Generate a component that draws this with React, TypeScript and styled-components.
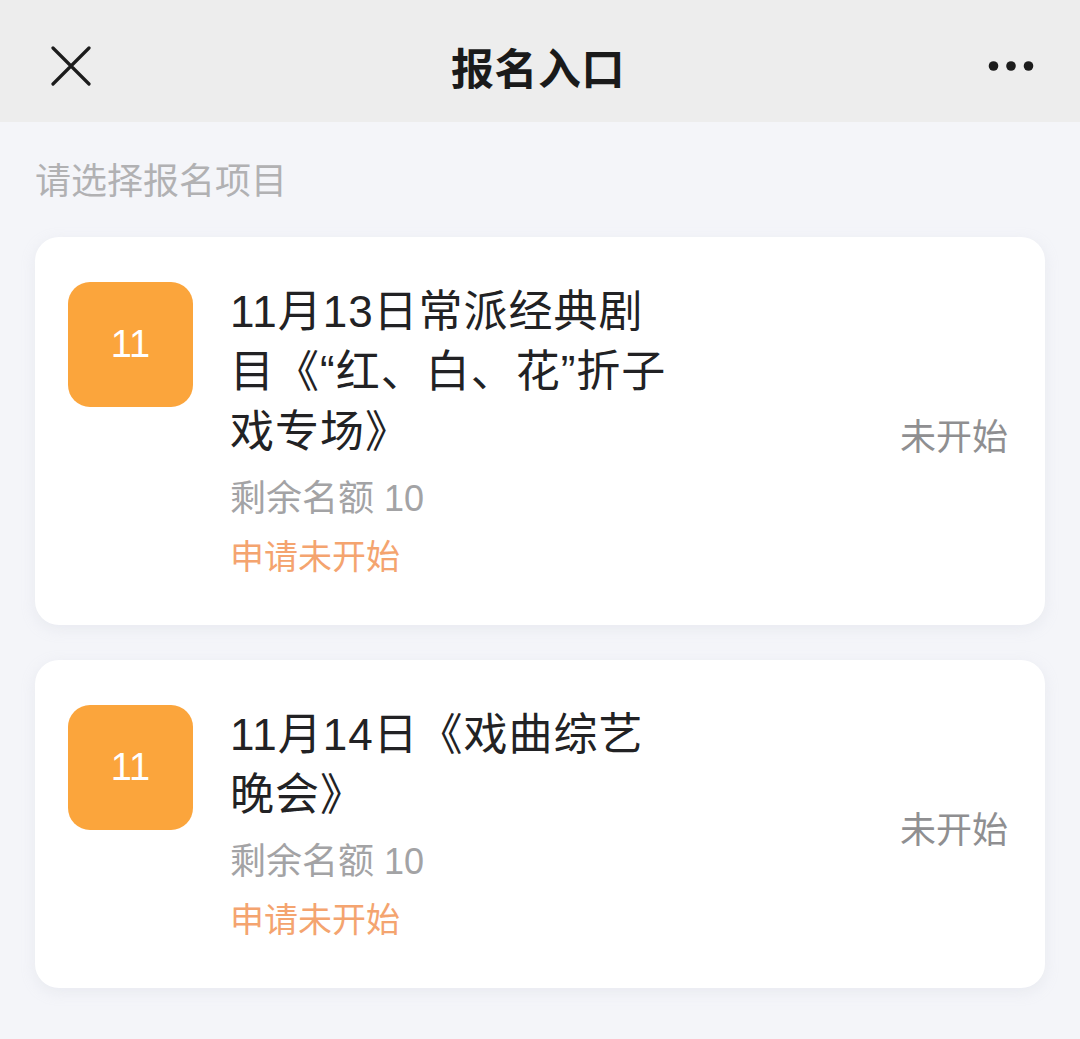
import React from "react";
import styled, { createGlobalStyle } from "styled-components";

interface Project {
  id: number;
  day: string;
  title: string;
  quota: number;
  applyText: string;
  status: string;
}

const projects: Project[] = [
  {
    id: 1,
    day: "11",
    title: "11月13日常派经典剧目《“红、白、花”折子戏专场》",
    quota: 10,
    applyText: "申请未开始",
    status: "未开始",
  },
  {
    id: 2,
    day: "11",
    title: "11月14日《戏曲综艺晚会》",
    quota: 10,
    applyText: "申请未开始",
    status: "未开始",
  },
];

const GlobalStyle = createGlobalStyle`
  html, body {
    margin: 0;
    padding: 0;
    background: #f4f5f9;
  }
  body {
    font-family: "Liberation Sans", "Noto Sans CJK SC", sans-serif;
  }
`;

const App: React.FC = () => {
  return (
    <>
      <GlobalStyle />
      <Page>
        <Header>
          <IconButton aria-label="close">
            <svg width="40" height="40" viewBox="0 0 40 40">
              <path
                d="M2 2 L38 38 M38 2 L2 38"
                stroke="#1c1c1c"
                strokeWidth="3.2"
                strokeLinecap="round"
              />
            </svg>
          </IconButton>
          <Title>报名入口</Title>
          <IconButton $right aria-label="more">
            <svg width="46" height="12" viewBox="0 0 46 12">
              <circle cx="5.5" cy="6" r="4.8" fill="#1c1c1c" />
              <circle cx="23" cy="6" r="4.8" fill="#1c1c1c" />
              <circle cx="40.5" cy="6" r="4.8" fill="#1c1c1c" />
            </svg>
          </IconButton>
        </Header>

        <Body>
          <SectionLabel>请选择报名项目</SectionLabel>
          <CardList>
            {projects.map((p) => (
              <Card key={p.id}>
                <DayBadge>{p.day}</DayBadge>
                <Info>
                  <ItemTitle>{p.title}</ItemTitle>
                  <Meta>剩余名额 {p.quota}</Meta>
                  <Meta $accent>{p.applyText}</Meta>
                </Info>
                <Status>{p.status}</Status>
              </Card>
            ))}
          </CardList>
        </Body>
      </Page>
    </>
  );
};
export default App;

const Page = styled.div`
  width: 1080px;
  min-height: 1039px;
  background: #f4f5f9;
`;

const Header = styled.header`
  height: 122px;
  background: #ededed;
  display: grid;
  grid-template-columns: 1fr auto 1fr;
  align-items: center;
  padding: 10px 46px 0 42px;
  box-sizing: border-box;
`;

const IconButton = styled.div<{ $right?: boolean }>`
  display: flex;
  align-items: center;
  justify-content: ${(p) => (p.$right ? "flex-end" : "flex-start")};
  height: 44px;
  padding-left: ${(p) => (p.$right ? "0" : "9px")};
`;

const Title = styled.h1`
  margin: 0;
  font-size: 43px;
  font-weight: 700;
  color: #1a1a1a;
  letter-spacing: 0.5px;
`;

const Body = styled.main`
  padding: 35px 35px 40px;
`;

const SectionLabel = styled.div`
  font-size: 36px;
  line-height: 50px;
  color: #b1b1b3;
`;

const CardList = styled.div`
  display: flex;
  flex-direction: column;
  gap: 35px;
  margin-top: 30px;
`;

const Card = styled.section`
  display: grid;
  grid-template-columns: 125px 1fr auto;
  column-gap: 37px;
  align-items: start;
  background: #ffffff;
  border-radius: 24px;
  padding: 45px 37px 39px 33px;
  box-shadow: 0 4px 14px rgba(200, 204, 216, 0.25);
`;

const DayBadge = styled.div`
  width: 125px;
  height: 125px;
  border-radius: 22px;
  background: #fba53c;
  color: #ffffff;
  font-size: 38px;
  display: flex;
  align-items: center;
  justify-content: center;
`;

const Info = styled.div`
  display: flex;
  flex-direction: column;
`;

const ItemTitle = styled.div`
  max-width: 445px;
  font-size: 44px;
  line-height: 60px;
  letter-spacing: 1px;
  color: #222224;
  margin-bottom: 8px;
`;

const Meta = styled.div<{ $accent?: boolean }>`
  font-size: ${(p) => (p.$accent ? "34px" : "36px")};
  line-height: 58px;
  color: ${(p) => (p.$accent ? "#f4a46f" : "#a3a3a5")};
`;

const Status = styled.div`
  align-self: center;
  font-size: 36px;
  color: #8f8f91;
`;
